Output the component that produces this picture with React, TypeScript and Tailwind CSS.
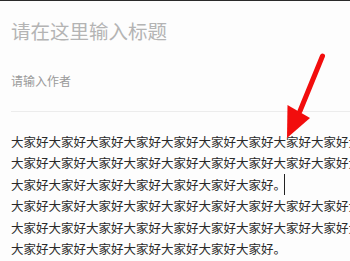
import React from "react";

const block = "大家好";
const longLine = block.repeat(12);
const shortLine = block.repeat(7) + "。";

export default function App() {
  return (
    <div
      className="relative w-[350px] h-[261px] overflow-hidden bg-[#fdfdfd] border-t border-[#2a2a2a]"
      style={{ fontFamily: '"Noto Sans CJK SC", "Noto Sans", sans-serif' }}
    >
      <div className="pl-[11px] pt-[18px]">
        <div className="h-[24px] leading-[24px] text-[19.5px] text-[#b4b4b4] whitespace-nowrap">
          请在这里输入标题
        </div>
        <div className="mt-[30px] h-[16px] leading-[16px] text-[12px] text-[#9a9a9a] whitespace-nowrap">
          请输入作者
        </div>
        <div className="mt-[22px] border-t border-[#ececec]" />
        <div className="pt-[18.5px] text-[12.5px] leading-[21.6px] text-[#2a2a2a] whitespace-nowrap overflow-hidden">
          <div>{longLine}</div>
          <div>{longLine}</div>
          <div className="flex items-center">
            <span>{shortLine}</span>
            <span className="-ml-[2px] inline-block w-px h-[21px] bg-[#222]" />
          </div>
          <div>{longLine}</div>
          <div>{longLine}</div>
          <div>{shortLine}</div>
        </div>
      </div>
      <svg
        className="absolute left-0 top-0"
        width="350"
        height="261"
        viewBox="0 0 350 261"
      >
        <line
          x1="322.5"
          y1="55"
          x2="300"
          y2="110"
          stroke="#f20d0d"
          strokeWidth="5"
          strokeLinecap="round"
        />
        <polygon points="287,137 287.5,104 310,117" fill="#f20d0d" />
      </svg>
    </div>
  );
}
